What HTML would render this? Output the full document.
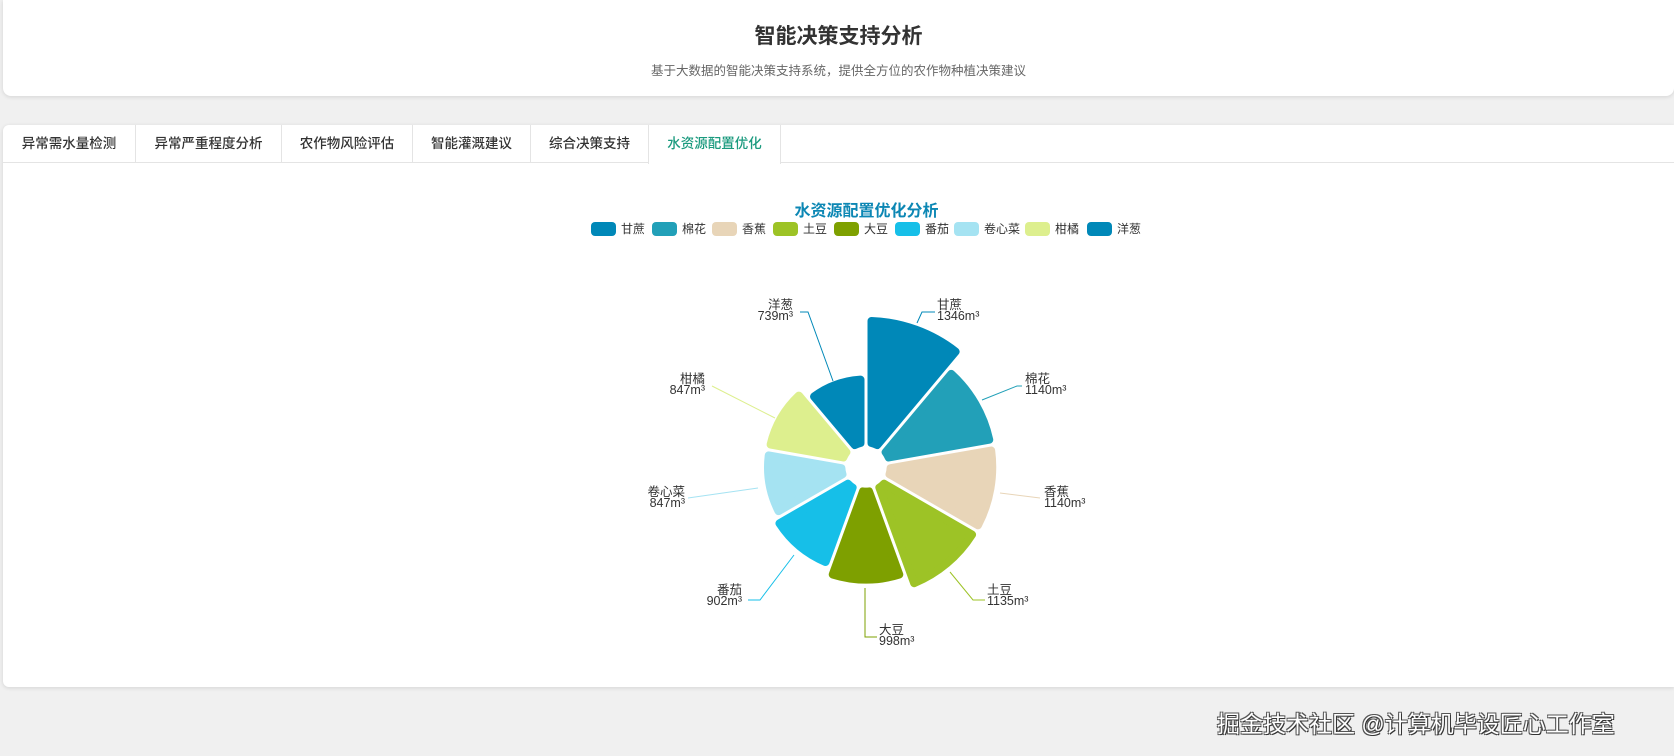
<!DOCTYPE html>
<html><head><meta charset="utf-8">
<style>
*{margin:0;padding:0;box-sizing:border-box}
body{width:1674px;height:756px;background:#f0f0f0;font-family:"Liberation Sans","Noto Sans CJK SC",sans-serif;position:relative;overflow:hidden}
.hdr{position:absolute;left:3px;top:0;width:1671px;height:96px;background:#fff;border-radius:0 0 8px 8px;box-shadow:0 1px 4px rgba(0,0,0,.12)}
.hdr h1{position:absolute;top:20px;width:100%;text-align:center;font-size:21px;font-weight:bold;color:#333;left:0}
.hdr p{position:absolute;top:60px;width:100%;text-align:center;font-size:12.5px;color:#666}
.card{position:absolute;left:3px;top:125px;width:1671px;height:562px;background:#fff;border-radius:6px 0 0 6px;box-shadow:0 1px 4px rgba(0,0,0,.12)}
.tabs{position:absolute;left:0;top:0;height:38px;width:100%;border-bottom:1px solid #e4e4e4}
.tab{position:absolute;top:0;height:38px;border-right:1px solid #e4e4e4;font-size:13.5px;color:#333;text-align:center;line-height:38px;font-weight:500}
.tab.act{color:#1a9a7e;background:#fff;height:39px;border-left:1px solid #e4e4e4}
.ct{position:absolute;top:72px;left:0;width:1727px;text-align:center;font-size:16px;font-weight:bold;color:#0c87b4}
.lg{position:absolute;top:222px;height:14px;font-size:12px;color:#333;line-height:14px;white-space:nowrap}
.lg i{display:inline-block;width:25px;height:14px;border-radius:4px;vertical-align:top;margin-right:5px}
.wm{position:absolute;left:1217px;top:705px;font-size:23px;color:#fff;text-shadow:1px 1px 0 #333,-1px -1px 0 #555,1px -1px 0 #555,-1px 1px 0 #555}
</style></head><body>
<div class="hdr"><h1>智能决策支持分析</h1><p>基于大数据的智能决策支持系统，提供全方位的农作物种植决策建议</p></div>
<div class="card">
<div class="tabs">
<div class="tab" style="left:0;width:133px">异常需水量检测</div>
<div class="tab" style="left:133px;width:146px">异常严重程度分析</div>
<div class="tab" style="left:279px;width:131px">农作物风险评估</div>
<div class="tab" style="left:410px;width:118px">智能灌溉建议</div>
<div class="tab" style="left:528px;width:118px">综合决策支持</div>
<div class="tab act" style="left:645px;width:133px">水资源配置优化</div>
</div>
<div class="ct">水资源配置优化分析</div>
</div>
<div class="lg" style="left:591px"><i style="background:#0088b8"></i>甘蔗</div>
<div class="lg" style="left:652px"><i style="background:#22a0b8"></i>棉花</div>
<div class="lg" style="left:712px"><i style="background:#e8d5b8"></i>香蕉</div>
<div class="lg" style="left:773px"><i style="background:#9dc326"></i>土豆</div>
<div class="lg" style="left:834px"><i style="background:#7ea000"></i>大豆</div>
<div class="lg" style="left:895px"><i style="background:#16bfe8"></i>番茄</div>
<div class="lg" style="left:954px"><i style="background:#a5e3f2"></i>卷心菜</div>
<div class="lg" style="left:1025px"><i style="background:#ddef8e"></i>柑橘</div>
<div class="lg" style="left:1087px"><i style="background:#0088b8"></i>洋葱</div>
<svg id="pie" width="1674" height="756" style="position:absolute;left:0;top:0" font-family="Liberation Sans, Noto Sans CJK SC, sans-serif" font-size="12.5" fill="#333"></svg>
<div class="wm">掘金技术社区 @计算机毕设匠心工作室</div>
<script>
var cx=866,cy=467,r0=20,k=0.0966;
var d=[["甘蔗",1346,"#0088b8"],["棉花",1140,"#22a0b8"],["香蕉",1140,"#e8d5b8"],["土豆",1135,"#9dc326"],["大豆",998,"#7ea000"],["番茄",902,"#16bfe8"],["卷心菜",847,"#a5e3f2"],["柑橘",847,"#ddef8e"],["洋葱",739,"#0088b8"]];
var s="";
function P(th,r,off){var ux=Math.sin(th),uy=-Math.cos(th);var nx=Math.cos(th),ny=Math.sin(th);return [cx+r*ux+off*nx,cy+r*uy+off*ny];}
for(var i=0;i<9;i++){
var a0=i*40*Math.PI/180,a1=(i+1)*40*Math.PI/180;
var R=r0+k*d[i][1]-4,ri=r0+4,o=5.5;
var p1=P(a0,ri,o),p2=P(a0,R,o),p3=P(a1,R,-o),p4=P(a1,ri,-o);
var path="M"+p1+"L"+p2+"A"+R+" "+R+" 0 0 1 "+p3+"L"+p4+"A"+ri+" "+ri+" 0 0 0 "+p1+"Z";
s+='<path d="'+path.replace(/,/g,' ')+'" fill="'+d[i][2]+'" stroke="'+d[i][2]+'" stroke-width="8" stroke-linejoin="round"/>';
}
var L=[
["M917 323L922 312L935 312","#0088b8",937,"start","甘蔗","1346m³",305],
["M982 400L1017 386L1022 386","#22a0b8",1025,"start","棉花","1140m³",379],
["M1000 493L1040 498","#e8d5b8",1044,"start","香蕉","1140m³",492],
["M950 572L973 600L985 600","#9dc326",987,"start","土豆","1135m³",590],
["M865 588L865 637L877 637","#7ea000",879,"start","大豆","998m³",630],
["M794 555L760 600L748 600","#16bfe8",742,"end","番茄","902m³",590],
["M758 488L688 498","#a5e3f2",685,"end","卷心菜","847m³",492],
["M775 418L712 386","#ddef8e",705,"end","柑橘","847m³",379],
["M833 381L808 312L800 312","#0088b8",793,"end","洋葱","739m³",305]];
L.forEach(function(l){s+='<path d="'+l[0]+'" fill="none" stroke="'+l[1]+'" stroke-width="1"/>';
s+='<text x="'+l[2]+'" y="'+(l[6]+4)+'" text-anchor="'+l[3]+'">'+l[4]+'</text><text x="'+l[2]+'" y="'+(l[6]+15)+'" text-anchor="'+l[3]+'">'+l[5]+'</text>';});
document.getElementById('pie').innerHTML=s;
</script>
</body></html>
